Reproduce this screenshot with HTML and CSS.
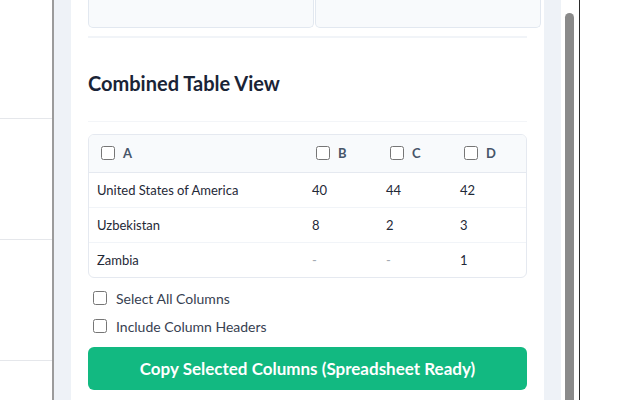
FILE: index.html
```html
<html>
	<head>
		<title>Combined Table View</title>
		<meta name="viewport" content="width=device-width, initial-scale=1">
		<link rel="stylesheet" href="styles.css">
	</head>
	<body>
		<div class="backdrop-list">
			<div class="backdrop-row"></div>
			<div class="backdrop-row"></div>
			<div class="backdrop-row"></div>
			<div class="backdrop-row"></div>
		</div>
		<div class="panel">
			<div class="panel-body">
				<div class="card">
					<div class="stats">
						<div class="stat"></div>
						<div class="stat"></div>
					</div>
					<div class="rule"></div>

					<h2>Combined Table View</h2>
					<div class="rule-thin"></div>

					<div class="table-box">
						<table>
							<tr>
								<th class="col-name"><label><input type="checkbox"/> A</label></th>
								<th class="col-num"><label><input type="checkbox"/> B</label></th>
								<th class="col-num"><label><input type="checkbox"/> C</label></th>
								<th class="col-num"><label><input type="checkbox"/> D</label></th>
							</tr>
							<tr>
								<td>United States of America</td>
								<td>40</td>
								<td>44</td>
								<td>42</td>
							</tr>
							<tr>
								<td>Uzbekistan</td>
								<td>8</td>
								<td>2</td>
								<td>3</td>
							</tr>
							<tr>
								<td>Zambia</td>
								<td class="empty">-</td>
								<td class="empty">-</td>
								<td>1</td>
							</tr>
						</table>
					</div>

					<div class="options">
						<label class="option"><input type="checkbox"/> Select All Columns</label>
						<label class="option"><input type="checkbox"/> Include Column Headers</label>
					</div>

					<button class="copy-btn">Copy Selected Columns (Spreadsheet Ready)</button>
				</div>
			</div>
			<div class="scrollbar">
				<div class="thumb"></div>
			</div>
		</div>
		<div class="backdrop-side"></div>
	</body>
</html>
```
FILE: styles.css
```css
* {
	box-sizing: border-box;
	font-family: Lato, "Noto Sans", sans-serif;
}
body {
	margin: 0;
	height: 400px;
	overflow: hidden;
	display: flex;
	background: white;
}

/* page behind the panel */
.backdrop-list {
	width: 52px;
	margin-top: -2px;
}
.backdrop-row {
	height: 121px;
	border-bottom: 1px solid #e5e7eb;
}
.backdrop-side {
	flex: 1;
}

/* panel */
.panel {
	display: flex;
	width: 528px;
	height: 400px;
	border-left: 2px solid #9b9b9b;
	border-right: 1px solid #2b2b2b;
}
.panel-body {
	width: 507px;
	padding: 0 17px;
	background: #eef2f7;
	overflow: hidden;
}
.scrollbar {
	width: 18px;
	padding: 13px 4px 0 4px;
	background: white;
}
.thumb {
	width: 9px;
	height: 420px;
	background: #8a8a8a;
	border-radius: 5px;
}

.card {
	background: white;
	padding: 0 17px;
	min-height: 400px;
}

/* bottom of the stats section, scrolled past */
.stats {
	display: flex;
	gap: 1px;
	margin-right: -14px;
}
.stat {
	flex: 1;
	height: 28px;
	background: #f8fafc;
	border: 1px solid #e2e8f0;
	border-top: none;
	border-radius: 0 0 5px 5px;
}
.rule {
	height: 2px;
	margin-top: 8px;
	background: #f1f4f8;
}

h2 {
	margin: 31px 0 0 0;
	font-size: 20px;
	line-height: 28px;
	font-weight: bold;
	color: #1a2436;
}
.rule-thin {
	height: 1px;
	margin-top: 24px;
	background: #f3f5f8;
}

/* table */
.table-box {
	margin-top: 12px;
	border: 1px solid #e5e9f0;
	border-radius: 6px;
	overflow: hidden;
}
table {
	width: 100%;
	border-collapse: collapse;
}
th {
	height: 37px;
	padding: 0 8px;
	text-align: left;
	background: #f8fafc;
	border-bottom: 1px solid #e5e9f0;
	font-size: 13px;
	font-weight: bold;
	color: #475569;
}
th label {
	display: flex;
	align-items: center;
	gap: 5px;
}
th input {
	width: 14px;
	height: 14px;
	margin: 0 3px 0 4px;
}
.col-name {
	width: 215px;
}
.col-num {
	width: 74px;
}
td {
	height: 35px;
	padding: 0 8px;
	font-size: 13px;
	color: #1f2937;
	border-bottom: 1px solid #f1f4f8;
}
tr:last-child td {
	border-bottom: none;
}
td.empty {
	color: #a3a9b3;
}

/* options */
.options {
	margin-top: 13px;
	display: flex;
	flex-direction: column;
	gap: 14px;
}
.option {
	display: flex;
	align-items: center;
	gap: 9px;
	font-size: 14px;
	color: #374151;
	height: 14px;
}
.option input {
	width: 14px;
	height: 14px;
	margin: 0 0 0 5px;
}

.copy-btn {
	display: block;
	width: 100%;
	height: 43px;
	margin-top: 14px;
	border: none;
	border-radius: 6px;
	background: #12b981;
	color: white;
	font-size: 17px;
	font-weight: bold;
}
```
